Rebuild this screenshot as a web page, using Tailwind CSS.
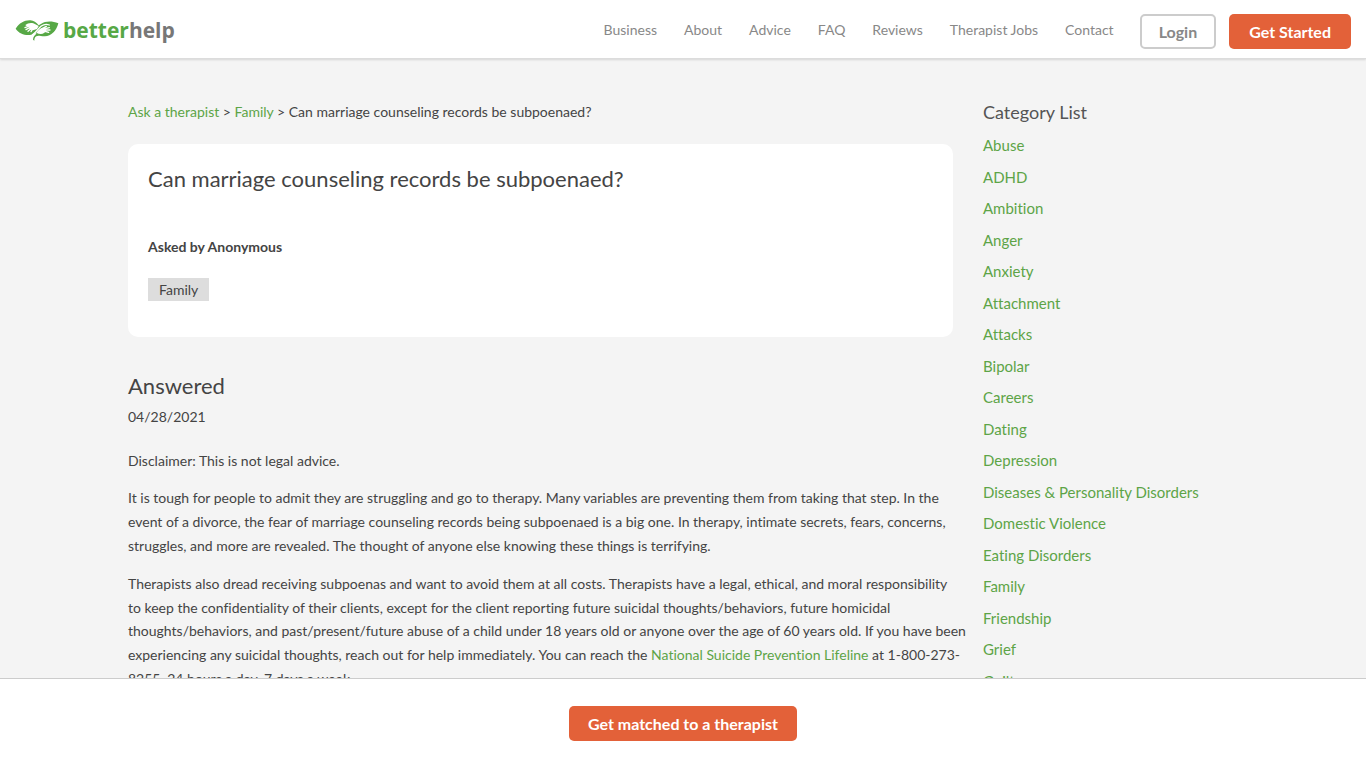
<!DOCTYPE html>
<html lang="en">
<head>
<meta charset="utf-8">
<meta name="viewport" content="width=device-width, initial-scale=1">
<title>Can marriage counseling records be subpoenaed?</title>
<script src="https://cdn.jsdelivr.net/npm/@tailwindcss/browser@4"></script>
</head>
<body class="flex h-screen flex-col overflow-hidden bg-[#f4f4f4] font-['Lato',sans-serif] text-sm leading-[1.7] text-[#444] [font-variant-ligatures:none]">

<header class="z-10 flex h-[59px] shrink-0 items-center justify-between border-b border-[#dcdcdc] bg-white px-[15px] shadow-[0_1px_2px_rgba(0,0,0,0.12)]">
  <a href="#" aria-label="betterhelp" class="flex items-center gap-1 pt-0.5">
    <svg class="h-[22px] w-11" viewBox="45 58 132 66" aria-hidden="true">
      <path fill="#57a846" d="M47 87C58 70 74 61 91 62C101 63 109 68 116 77L124 72C135 65 155 63 175 71C169 94 153 111 133 110C121 110 115 106 109 110C104 113 103 118 103 123L99 120C99 111 104 106 110 102L105 99C92 111 61 108 47 87Z"/>
      <path fill="none" stroke="#fff" stroke-width="4" stroke-linecap="round" d="M98 105C108 99 113 88 124 79C131 74 141 73 148 76"/>
      <path fill="none" stroke="#fff" stroke-width="4" stroke-linecap="round" d="M91 78L75 84M94 81L78 90M97 84L84 95M101 83L93 96"/>
      <path fill="#fff" d="M76 76C84 69 97 67 106 74L116 79L111 88L99 92L88 89L88 80C84 81 79 80 76 76Z"/>
      <path fill="none" stroke="#fff" stroke-width="4" stroke-linecap="round" d="M128 86L139 80M132 88L148 84M134 91L150 91M132 94L146 98"/>
      <path fill="#fff" d="M109 99C115 90 122 84 130 84L137 88L137 96L132 100C127 104 117 104 109 99Z"/>
    </svg>
    <span class="font-['Open_Sans',sans-serif] text-[21px] leading-6 font-bold text-[#57a846]">better<span class="text-[#777]">help</span></span>
  </a>
  <div class="flex items-center pt-1">
    <nav class="flex gap-[27px] pr-[26px] pb-0.5 text-[#888]">
      <a href="#">Business</a>
      <a href="#">About</a>
      <a href="#">Advice</a>
      <a href="#">FAQ</a>
      <a href="#">Reviews</a>
      <a href="#">Therapist Jobs</a>
      <a href="#">Contact</a>
    </nav>
    <div class="flex gap-[13px]">
      <button type="button" class="h-[35px] rounded-[5px] border-2 border-[#ccc] px-[17px] pt-0.5 text-base leading-5 font-bold text-[#888]">Login</button>
      <button type="button" class="h-[35px] rounded-[5px] bg-[#e36139] px-5 pt-0.5 text-base leading-5 font-bold text-white">Get Started</button>
    </div>
  </div>
</header>

<main class="min-h-0 flex-1 overflow-hidden">
  <div class="mx-auto grid max-w-[1140px] grid-cols-4 gap-[30px] px-[15px] pt-[41px]">
    <article class="col-span-3">
      <nav aria-label="Breadcrumb"><a href="#" class="text-[#5da447]">Ask a therapist</a> &gt; <a href="#" class="text-[#5da447]">Family</a> &gt; Can marriage counseling records be subpoenaed?</nav>

      <section class="mt-5 h-[193px] rounded-[10px] bg-white px-5 pt-[19px]">
        <h1 class="text-[22px] leading-8">Can marriage counseling records be subpoenaed?</h1>
        <p class="mt-10 font-bold">Asked by Anonymous</p>
        <a href="#" class="mt-[19px] inline-block bg-[#ddd] px-[11px]">Family</a>
      </section>

      <section>
        <h2 class="mt-[33px] text-[22px] leading-8">Answered</h2>
        <p class="mt-[3px]">04/28/2021</p>
        <div class="mt-5 -mr-5 flex flex-col gap-3.5">
          <p>Disclaimer: This is not legal advice.</p>
          <p>It is tough for people to admit they are struggling and go to therapy. Many variables are preventing them from taking that step. In the event of a divorce, the fear of marriage counseling records being subpoenaed is a big one. In therapy, intimate secrets, fears, concerns, struggles, and more are revealed. The thought of anyone else knowing these things is terrifying.</p>
          <p>Therapists also dread receiving subpoenas and want to avoid them at all costs. Therapists have a legal, ethical, and moral responsibility<br>to keep the confidentiality of their clients, except for the client reporting future suicidal thoughts/behaviors, future homicidal<br>thoughts/behaviors, and past/present/future abuse of a child under 18 years old or anyone over the age of 60 years old. If you have been<br>experiencing any suicidal thoughts, reach out for help immediately. You can reach the <a href="#" class="text-[#5da447]">National Suicide Prevention Lifeline</a> at 1-800-273-<br>8255, 24 hours a day, 7 days a week.</p>
        </div>
      </section>
    </article>

    <aside>
      <h2 class="text-lg leading-6 text-[#555]">Category List</h2>
      <ul class="mt-[9px] flex flex-col gap-1.5 text-[15px] text-[#5da447]">
        <li><a href="#">Abuse</a></li>
        <li><a href="#">ADHD</a></li>
        <li><a href="#">Ambition</a></li>
        <li><a href="#">Anger</a></li>
        <li><a href="#">Anxiety</a></li>
        <li><a href="#">Attachment</a></li>
        <li><a href="#">Attacks</a></li>
        <li><a href="#">Bipolar</a></li>
        <li><a href="#">Careers</a></li>
        <li><a href="#">Dating</a></li>
        <li><a href="#">Depression</a></li>
        <li><a href="#">Diseases &amp; Personality Disorders</a></li>
        <li><a href="#">Domestic Violence</a></li>
        <li><a href="#">Eating Disorders</a></li>
        <li><a href="#">Family</a></li>
        <li><a href="#">Friendship</a></li>
        <li><a href="#">Grief</a></li>
        <li><a href="#">Guilt</a></li>
      </ul>
    </aside>
  </div>
</main>

<footer class="flex h-[90px] shrink-0 items-center justify-center border-t border-[#ccc] bg-white">
  <button type="button" class="h-[35px] rounded-[5px] bg-[#e36139] px-[19px] text-base font-bold text-white">Get matched to a therapist</button>
</footer>

</body>
</html>
